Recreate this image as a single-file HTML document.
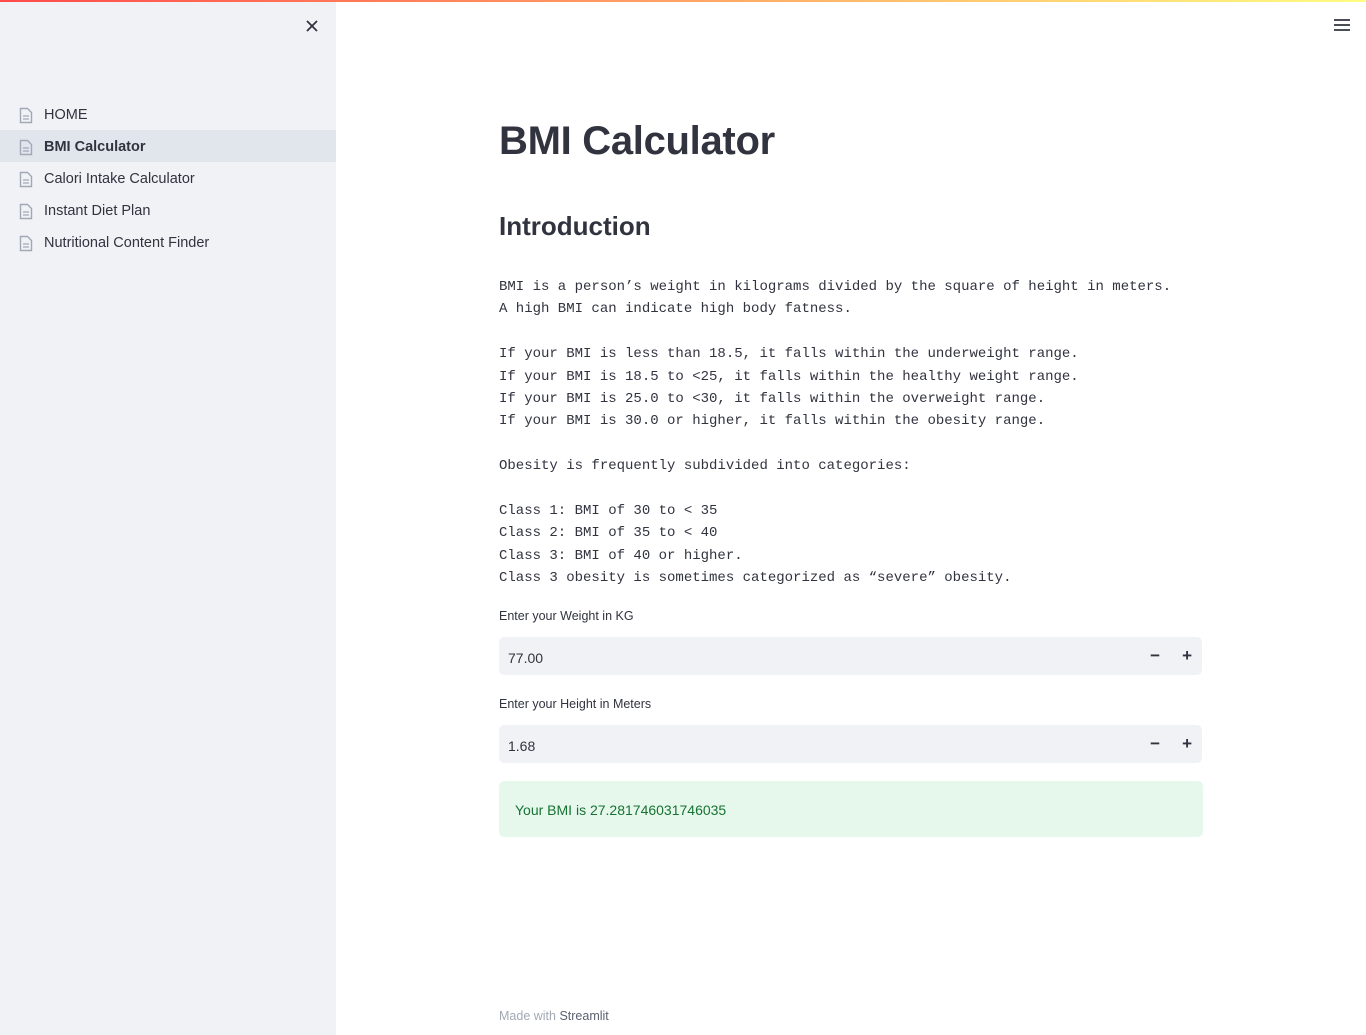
<!DOCTYPE html>
<html><head><meta charset="utf-8"><style>
*{margin:0;padding:0;box-sizing:border-box}
body{width:1366px;height:1035px;position:relative;overflow:hidden;background:#fff;font-family:"Liberation Sans",sans-serif;color:#31333f}
.bar{position:absolute;top:0;left:0;width:1366px;height:2px;background:linear-gradient(90deg,#ff4b4b,#fffd80)}
.side{position:absolute;left:0;top:2px;width:336px;height:1033px;background:#f0f2f6}
.nav{position:absolute;left:0;width:336px;height:32px;display:flex;align-items:center;font-size:14.5px;color:#31333f;padding-top:2px}
.nav svg{margin-left:19px;margin-right:11px}
.sel{background:#e1e5ec;font-weight:bold}
.abs{position:absolute}
pre{font-family:"Liberation Mono",monospace;font-size:14px;line-height:22.4px;color:#31333f;position:absolute;left:499px;top:276px}
.lbl{position:absolute;left:499px;font-size:12.5px;color:#31333f}
.inp{position:absolute;left:499px;width:703px;height:38px;background:#f0f2f6;border-radius:5px;font-size:14px;padding:2px 9px 0;line-height:38px}
.inp .m{position:absolute;right:42px;top:0;font-weight:bold;font-size:17px}
.inp .p{position:absolute;right:10px;top:0;font-weight:bold;font-size:17px}
</style></head><body>
<div class="bar"></div>
<div class="side">
<svg class="abs" style="left:305px;top:17px" width="14" height="14" viewBox="0 0 14 14"><path d="M2 2L12 12M12 2L2 12" stroke="#31333f" stroke-width="1.8"/></svg>
</div>
<div class="nav" style="top:98px"><svg width="14" height="17" viewBox="0 0 14 17"><path d="M1.5 1.5h7l4 4v10h-11z" fill="none" stroke="#a3a8b8" stroke-width="1.4"/><path d="M4 9h6M4 12h6" stroke="#a3a8b8" stroke-width="1.3"/></svg>HOME</div>
<div class="nav sel" style="top:130px"><svg width="14" height="17" viewBox="0 0 14 17"><path d="M1.5 1.5h7l4 4v10h-11z" fill="none" stroke="#a3a8b8" stroke-width="1.4"/><path d="M4 9h6M4 12h6" stroke="#a3a8b8" stroke-width="1.3"/></svg>BMI Calculator</div>
<div class="nav" style="top:162px"><svg width="14" height="17" viewBox="0 0 14 17"><path d="M1.5 1.5h7l4 4v10h-11z" fill="none" stroke="#a3a8b8" stroke-width="1.4"/><path d="M4 9h6M4 12h6" stroke="#a3a8b8" stroke-width="1.3"/></svg>Calori Intake Calculator</div>
<div class="nav" style="top:194px"><svg width="14" height="17" viewBox="0 0 14 17"><path d="M1.5 1.5h7l4 4v10h-11z" fill="none" stroke="#a3a8b8" stroke-width="1.4"/><path d="M4 9h6M4 12h6" stroke="#a3a8b8" stroke-width="1.3"/></svg>Instant Diet Plan</div>
<div class="nav" style="top:226px"><svg width="14" height="17" viewBox="0 0 14 17"><path d="M1.5 1.5h7l4 4v10h-11z" fill="none" stroke="#a3a8b8" stroke-width="1.4"/><path d="M4 9h6M4 12h6" stroke="#a3a8b8" stroke-width="1.3"/></svg>Nutritional Content Finder</div>
<svg class="abs" style="left:1334px;top:19px" width="16" height="12" viewBox="0 0 16 12"><path d="M0 1h16M0 6h16M0 11h16" stroke="#31333f" stroke-width="1.8"/></svg>
<div class="abs" style="left:499px;top:119px;font-size:40px;font-weight:bold;letter-spacing:-0.3px">BMI Calculator</div>
<div class="abs" style="left:499px;top:211px;font-size:26px;font-weight:bold">Introduction</div>
<pre>BMI is a person’s weight in kilograms divided by the square of height in meters.
A high BMI can indicate high body fatness.

If your BMI is less than 18.5, it falls within the underweight range.
If your BMI is 18.5 to &lt;25, it falls within the healthy weight range.
If your BMI is 25.0 to &lt;30, it falls within the overweight range.
If your BMI is 30.0 or higher, it falls within the obesity range.

Obesity is frequently subdivided into categories:

Class 1: BMI of 30 to &lt; 35
Class 2: BMI of 35 to &lt; 40
Class 3: BMI of 40 or higher.
Class 3 obesity is sometimes categorized as “severe” obesity.</pre>
<div class="lbl" style="top:609px">Enter your Weight in KG</div>
<div class="inp" style="top:637px">77.00<span class="m">−</span><span class="p">+</span></div>
<div class="lbl" style="top:697px">Enter your Height in Meters</div>
<div class="inp" style="top:725px">1.68<span class="m">−</span><span class="p">+</span></div>
<div class="abs" style="left:499px;top:781px;width:704px;height:56px;background:#e6f8ec;border-radius:5px;color:#177233;font-size:14px;padding:21px 16px">Your BMI is 27.281746031746035</div>
<div class="abs" style="left:499px;top:1009px;font-size:12.5px;color:#a3a8b4">Made with <span style="color:#5c6070">Streamlit</span></div>
</body></html>
